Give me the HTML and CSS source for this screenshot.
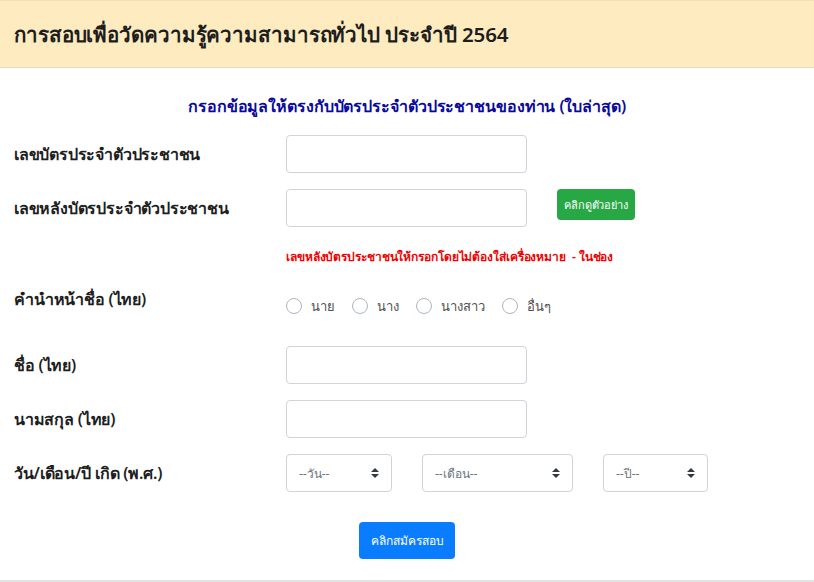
FILE: index.html
```html
<!DOCTYPE html>
<html lang="th">
<head>
<meta charset="utf-8">
<title>การสอบเพื่อวัดความรู้ความสามารถทั่วไป</title>
<link rel="stylesheet" href="styles.css">
</head>
<body>
<div class="card">
  <div class="card-header">
    <h1 class="title">การสอบเพื่อวัดความรู้ความสามารถทั่วไป ประจำปี 2564</h1>
  </div>
  <div class="card-body">
    <p class="intro">กรอกข้อมูลให้ตรงกับบัตรประจำตัวประชาชนของท่าน (ใบล่าสุด)</p>

    <div class="row">
      <label class="label">เลขบัตรประจำตัวประชาชน</label>
      <div class="control"><input class="input" type="text"></div>
    </div>

    <div class="row row-gap">
      <label class="label">เลขหลังบัตรประจำตัวประชาชน</label>
      <div class="control"><input class="input" type="text"></div>
      <button class="btn btn-green" type="button">คลิกดูตัวอย่าง</button>
    </div>

    <p class="note">เลขหลังบัตรประชาชนให้กรอกโดยไม่ต้องใส่เครื่องหมาย&nbsp; - ในช่อง</p>

    <div class="row row-radio">
      <label class="label">คำนำหน้าชื่อ (ไทย)</label>
      <div class="radios">
        <span class="radio"><span class="circle"></span>นาย</span>
        <span class="radio"><span class="circle"></span>นาง</span>
        <span class="radio"><span class="circle"></span>นางสาว</span>
        <span class="radio"><span class="circle"></span>อื่นๆ</span>
      </div>
    </div>

    <div class="row row-name">
      <label class="label">ชื่อ (ไทย)</label>
      <div class="control"><input class="input" type="text"></div>
    </div>

    <div class="row row-gap">
      <label class="label">นามสกุล (ไทย)</label>
      <div class="control"><input class="input" type="text"></div>
    </div>

    <div class="row row-gap">
      <label class="label">วัน/เดือน/ปี เกิด (พ.ศ.)</label>
      <div class="selects">
        <div class="select sel-day"><span>--วัน--</span><span class="arrows"></span></div>
        <div class="select sel-month"><span>--เดือน--</span><span class="arrows"></span></div>
        <div class="select sel-year"><span>--ปี--</span><span class="arrows"></span></div>
      </div>
    </div>

    <div class="submit-wrap">
      <button class="btn btn-blue" type="button">คลิกสมัครสอบ</button>
    </div>
  </div>
</div>
</body>
</html>
```

FILE: styles.css
```css
* { box-sizing: border-box; }

html, body {
  margin: 0;
  padding: 0;
  background: #ffffff;
}

body {
  font-family: "Noto Sans", "DejaVu Sans", sans-serif;
  color: #212529;
}

.card {
  border-bottom: 2px solid #e3e3e3;
  height: 582px;
}

.card-header {
  height: 68px;
  background: #feecc0;
  border-top: 1px solid #efe0bb;
  border-bottom: 1px solid #e2d9c4;
  display: flex;
  align-items: center;
  padding: 0 14px;
}

.title {
  margin: 0;
  font-size: 20.5px;
  font-weight: 600;
  letter-spacing: -0.1px;
  color: #1d1d1d;
}

.card-body {
  padding-top: 26px;
}

.intro {
  margin: 0 0 16px;
  height: 25px;
  line-height: 25px;
  text-align: center;
  color: #0a0a9a;
  font-size: 16px;
  font-weight: 600;
  letter-spacing: -0.1px;
}

.row {
  display: flex;
  align-items: center;
  height: 38px;
}

.row-gap { margin-top: 16px; }

.label {
  width: 286px;
  padding-left: 14px;
  font-size: 16px;
  font-weight: 600;
  letter-spacing: -0.2px;
  color: #1e1e1e;
}

.control { width: 241px; }

.input {
  display: block;
  width: 241px;
  height: 38px;
  border: 1px solid #ced4da;
  border-radius: 4px;
  background: #fff;
}

.btn {
  border: none;
  color: #fff;
  font-family: inherit;
  cursor: pointer;
}

.btn-green {
  margin-left: 30px;
  align-self: flex-start;
  width: 78px;
  height: 31px;
  border-radius: 4px;
  background: #28a745;
  font-size: 11px;
  letter-spacing: -0.2px;
}

.note {
  margin: 20px 0 0 286px;
  height: 20px;
  line-height: 20px;
  color: #f00000;
  font-size: 12px;
  font-weight: 600;
  letter-spacing: -0.1px;
}

.row-radio { margin-top: 13px; }

.radios {
  display: flex;
  align-items: center;
  padding-top: 14px;
}

.radio {
  display: inline-flex;
  align-items: center;
  font-size: 13px;
  color: #505050;
  margin-right: 17px;
}

.circle {
  display: inline-block;
  width: 16px;
  height: 16px;
  border: 1px solid #adb5bd;
  border-radius: 50%;
  background: #fff;
  margin-right: 9px;
}

.row-name { margin-top: 28px; }

.selects {
  display: flex;
  align-items: center;
}

.select {
  height: 38px;
  border: 1px solid #ced4da;
  border-radius: 4px;
  background: #fff;
  display: flex;
  align-items: center;
  justify-content: space-between;
  padding: 0 12px;
  font-size: 12px;
  color: #6c757d;
}

.sel-day { width: 106px; }
.sel-month { width: 151px; margin-left: 30px; }
.sel-year { width: 105px; margin-left: 30px; }

.arrows {
  position: relative;
  width: 8px;
  height: 10px;
}

.arrows::before,
.arrows::after {
  content: "";
  position: absolute;
  left: 0;
  border-left: 4px solid transparent;
  border-right: 4px solid transparent;
}

.arrows::before {
  top: 0;
  border-bottom: 4px solid #343a40;
}

.arrows::after {
  bottom: 0;
  border-top: 4px solid #343a40;
}

.submit-wrap {
  display: flex;
  justify-content: center;
  margin-top: 30px;
}

.btn-blue {
  width: 96px;
  height: 37px;
  border-radius: 4px;
  background: #0a7cff;
  font-size: 12px;
}
```
